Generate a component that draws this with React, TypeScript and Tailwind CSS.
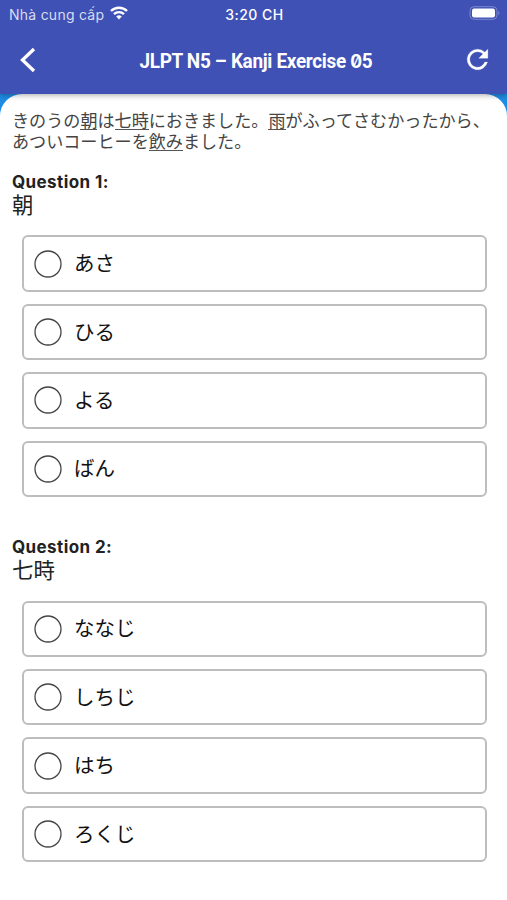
import { useState } from "react"

const QUESTIONS = [
    { id: 1, word: "朝", options: ["あさ", "ひる", "よる", "ばん"] },
    { id: 2, word: "七時", options: ["ななじ", "しちじ", "はち", "ろくじ"] },
]

export default function App() {
    const [answers, setAnswers] = useState<Record<number, string>>({})

    return (
        <main className="flex h-[900px] w-full flex-col overflow-hidden bg-[#1e8ce3] font-['Inter','Noto_Sans_CJK_JP',sans-serif]">
            <header className="z-10 h-[94px] shrink-0 bg-[#3f51b5] text-white shadow-[0_1px_6px_rgba(0,0,0,0.35)]">
                <StatusBar />
                <div className="grid h-[64px] grid-cols-[60px_1fr_60px] items-center">
                    <button className="pl-[20px]" aria-label="Back">
                        <svg width="16" height="26" viewBox="0 0 16 26" fill="none" stroke="currentColor" strokeWidth="3.3">
                            <path d="M14 2 2.5 13 14 24" />
                        </svg>
                    </button>
                    <h1 className="flex justify-center pt-[2px] pl-[4px] text-center font-['Roboto',sans-serif] text-[20.5px] font-bold whitespace-nowrap">
                        <span className="scale-x-[0.925] tracking-[-0.35px]">
                            JLPT N5 – Kanji Exercise <span className="font-['Inter'] text-[19px] tracking-[-0.5px] [font-feature-settings:'zero']">0</span>5
                        </span>
                    </h1>
                    <button className="pb-[2px] pl-[15px]" aria-label="Reload" onClick={() => setAnswers({})}>
                        <svg width="31" height="31" viewBox="0 0 24 24" fill="currentColor" stroke="currentColor" strokeWidth=".2">
                            <path d="M17.65 6.35A7.96 7.96 0 0 0 12 4a8 8 0 1 0 7.73 10h-2.08A6 6 0 1 1 12 6c1.66 0 3.14.69 4.22 1.78L13 11h7V4z" />
                        </svg>
                    </button>
                </div>
            </header>

            <div className="flex-1 rounded-t-[22px] bg-white px-3 pt-[16px] text-[#222]">
                <p className="text-[17.1px] leading-[21.3px] whitespace-nowrap text-[#444]">
                    きのうの<Mark>朝</Mark>は<Mark>七時</Mark>におきました。<Mark>雨</Mark>がふってさむかったから、
                    <br />
                    あついコーヒーを<Mark>飲み</Mark>ました。
                </p>

                {QUESTIONS.map((q) => (
                    <section key={q.id} className="h-[365.2px] pt-[18px]">
                        <h2 className="text-[17px] leading-[22px] font-bold tracking-[0.4px]">Question {q.id}:</h2>
                        <p className="text-[21.4px] leading-6">{q.word}</p>
                        <div className="mt-[18.8px] mr-[8px] ml-[9.5px] flex flex-col gap-3">
                            {q.options.map((o) => (
                                <Option
                                    key={o}
                                    label={o}
                                    checked={answers[q.id] === o}
                                    onSelect={() => setAnswers((p) => ({ ...p, [q.id]: o }))}
                                />
                            ))}
                        </div>
                    </section>
                ))}
            </div>
        </main>
    )
}

function StatusBar() {
    return (
        <div className="grid h-[28px] grid-cols-[1fr_auto_1fr] items-center pr-[7px] pl-[9px] text-[14px]">
            <div className="flex items-center gap-[6px] whitespace-nowrap text-[#d9dcf0]">
                <span className="tracking-[0.25px]">Nhà cung cấp</span>
                <svg className="-mt-[2px]" width="18" height="14" viewBox="0 0 18 14" fill="none" stroke="#fff" strokeWidth="2.4">
                    <path d="M1 5a11.3 11.3 0 0 1 16 0M4 8.2a7 7 0 0 1 10 0" />
                    <path d="m9 13.5-2.8-3a4 4 0 0 1 5.6 0z" fill="#fff" stroke="none" />
                </svg>
            </div>
            <span className="text-center font-medium tracking-[0.5px]">3:20 CH</span>
            <svg className="-mt-[2px] justify-self-end" width="31" height="14" viewBox="0 0 31 14">
                <rect x="1" y=".7" width="27" height="12.6" rx="4" fill="none" stroke="#7c87ca" />
                <rect x="3" y="2.6" width="23" height="8.8" rx="2.2" fill="#fff" />
                <path d="M29.3 5v4c1.5-.6 1.5-3.4 0-4" fill="#7c87ca" />
            </svg>
        </div>
    )
}

function Mark({ children }: { children: string }) {
    return <span className="inline-block h-[20px] border-b border-[#555] align-top leading-[21.3px]">{children}</span>
}

function Option({ label, checked, onSelect }: { label: string; checked: boolean; onSelect: () => void }) {
    return (
        <button
            className="flex h-[56.4px] items-center gap-[12px] rounded-[6px] border-2 border-[#bdbdbd] pl-[10.5px] text-left text-[20.5px] text-[#111]"
            onClick={onSelect}
        >
            <svg width="28" height="28" viewBox="0 0 28 28" fill="none" stroke="#444" strokeWidth="1.3">
                <circle cx="14" cy="14" r="13" />
                {checked && <circle cx="14" cy="14" r="7" fill="#3f51b5" stroke="none" />}
            </svg>
            <span className="pt-[2px]">{label}</span>
        </button>
    )
}
